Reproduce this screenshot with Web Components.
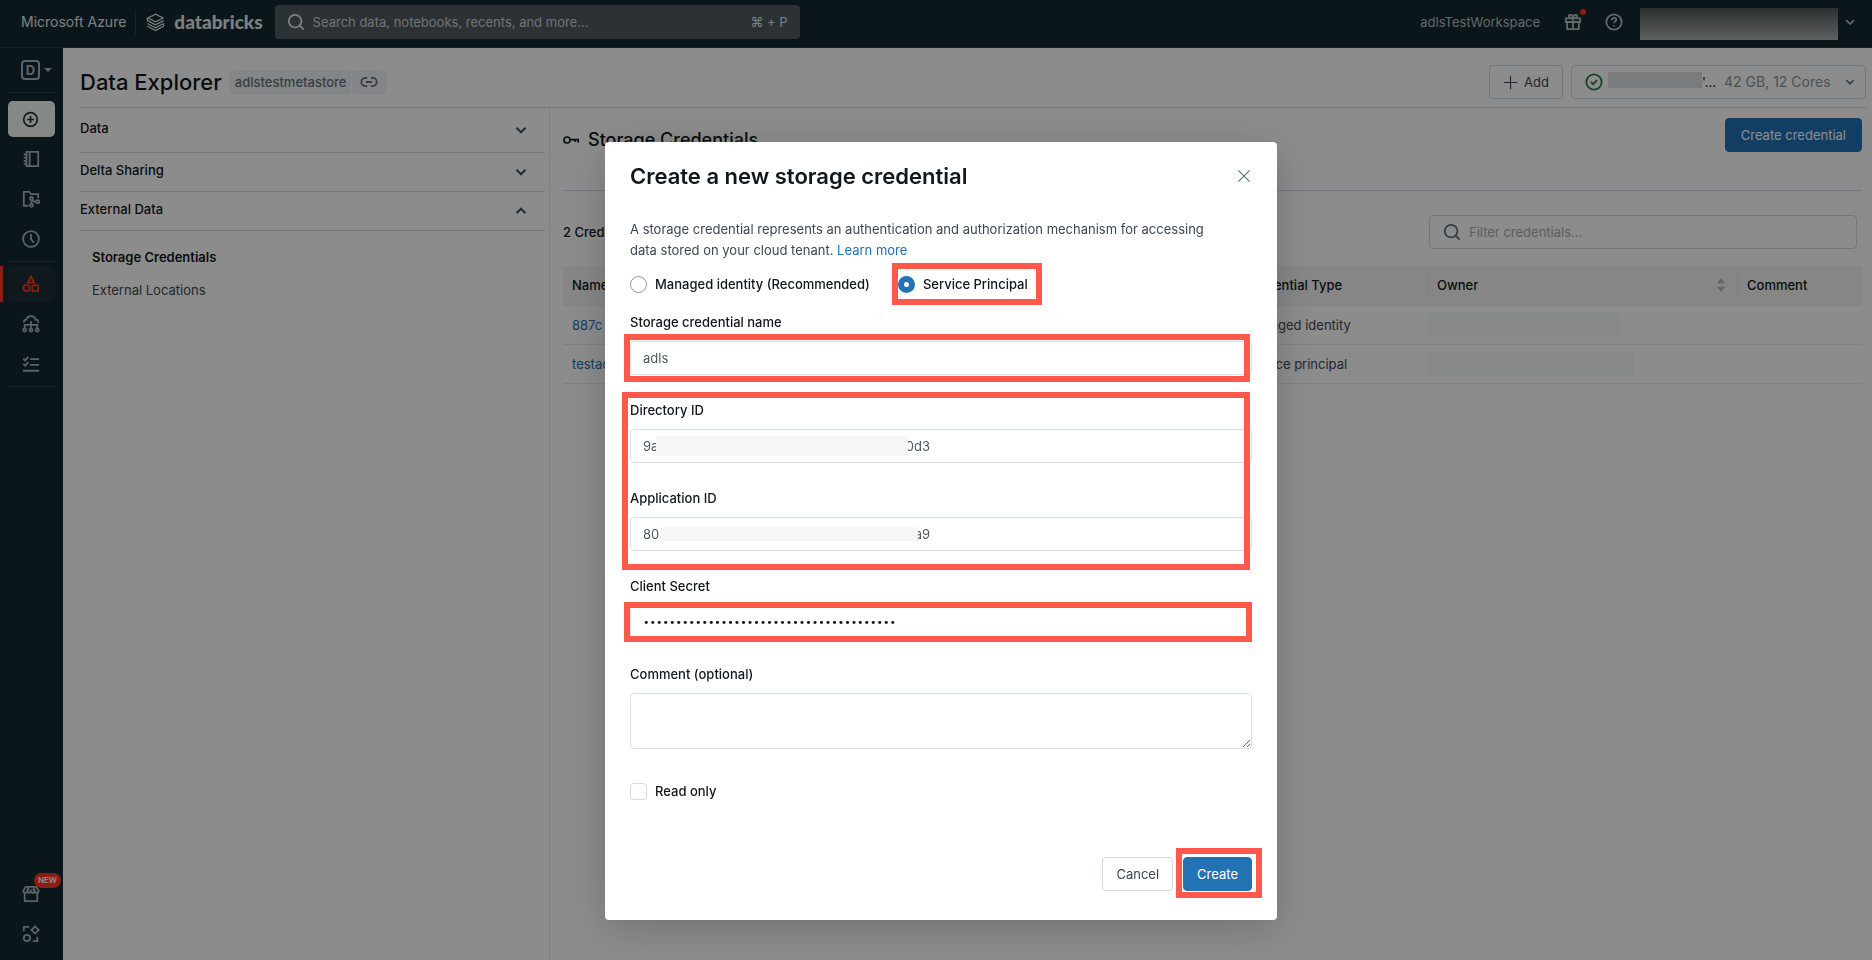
<!DOCTYPE html>
<html lang="en">
<head>
<meta charset="utf-8">
<title>Data Explorer</title>
<style>
  body { margin: 0; font: 14px/20px Inter, "Liberation Sans", sans-serif; color: #11171c; }
</style>
</head>
<body>
<app-shell>
  <app-topbar slot="top"></app-topbar>
  <app-sidebar slot="side"></app-sidebar>
  <page-header slot="head"></page-header>
  <nav slot="nav" aria-label="Data explorer">
    <nav-section label="Data"></nav-section>
    <nav-section label="Delta Sharing"></nav-section>
    <nav-section label="External Data" open>
      <nav-entry current>Storage Credentials</nav-entry>
      <nav-entry>External Locations</nav-entry>
    </nav-section>
  </nav>
  <credentials-view></credentials-view>
</app-shell>
<modal-dialog heading="Create a new storage credential">
  <credential-form></credential-form>
</modal-dialog>

<script>
const icons = {
  logo: '<path d="M2 5.300 10 1.300l8 4-8 4zM1.500 8l8.500 4.500L18.500 8M1.500 11l8.500 4.500 8.500-4.500M1.500 14l8.500 4.500 8.500-4.500M1.500 8v-2.500M18.500 14v-3" stroke-width="1.300"/>',
  search: '<circle cx="9" cy="9" r="7"/><path d="m14 14 4.500 4.500"/>',
  gift: '<path d="M2 6h16v4H2zM3.500 10v8h13v-8M10 6v12M10 6C5 6 4 2 7 2s3 4 3 4 0-4 3-4 2 4-3 4z"/>',
  help: '<circle cx="10" cy="10" r="8.500"/><path d="M7.500 8c0-3.500 5-3.500 5-.5 0 2-2.500 2-2.500 4M10 13.500v1.500"/>',
  down: '<path d="m5 7.500 5 5 5-5"/>',
  up: '<path d="m5 12.500 5-5 5 5"/>',
  caret: '<path d="M0 5h20l-10 10z" fill="currentColor" stroke="none"/>',
  plusCircle: '<circle cx="10" cy="10" r="8"/><path d="M10 6v8M6 10h8"/>',
  notebook: '<path d="M5 2h13v16H5zM8.500 2v16M2 5h4M2 8.500h4M2 12h4M2 15.500h4"/>',
  repo: '<path d="M7 17.500H2V2h6l2 2.500h8V9"/><circle cx="10.500" cy="9.500" r="1.700"/><circle cx="10.500" cy="17" r="1.700"/><circle cx="17.500" cy="13" r="1.700"/><path d="M10.500 11v4.500M11.500 11l2 2h2.500"/>',
  clock: '<circle cx="10" cy="10" r="8.800"/><path d="M10 4.500V10l3 4"/>',
  shapes: '<path d="m10 1.500 3.500 7h-7z"/><circle cx="5" cy="14.500" r="3.500"/><path d="M11.500 11.500h6.500v6.500h-6.500z"/>',
  cloud: '<path d="M2.500 8.500C1.500 6.500 3 5 5 5c1-5 9-5 10 0 2.500 0 3.500 1.500 2.500 3.500M3 15v-4h14v4M10 7v8"/><circle cx="3" cy="16.800" r="1.700"/><circle cx="10" cy="16.800" r="1.700"/><circle cx="17" cy="16.800" r="1.700"/>',
  tasks: '<path d="m1.500 4 2 2 3.500-4M1.500 10l2 2L7 8M9 4.500h10M9 11h10M1 17.500h18"/>',
  market: '<path d="M4 2h12l2.500 4.500c0 3-3.500 3-4.200.5-.8 2.500-3.600 2.500-4.300 0-.7 2.500-3.500 2.500-4.300 0-.7 2.500-4.200 2.500-4.200-.5zM3 9v9h14V9M7 2v5M13 2v5"/>',
  partner: '<path d="M8 2H2v5M12 18h5v-5M14.500 1.500 18.500 5.500l-4 4-4-4z"/><circle cx="5.500" cy="14.500" r="3.500"/>',
  link: '<path d="M8 14.500H6a4.500 4.500 0 0 1 0-9h2M12 5.500h2a4.500 4.500 0 0 1 0 9h-2M6.500 10h7"/>',
  plus: '<path d="M10 1v18M1 10h18"/>',
  check: '<circle cx="10" cy="10" r="8.500"/><path d="m6.500 10 2.500 2.500L13.500 8"/>',
  key: '<circle cx="5" cy="10" r="3.800"/><path d="M9 9.500h10v4M15 9.500v3"/>',
  close: '<path d="M3 3l14 14M17 3 3 17"/>',
  sort: '<path d="m10 0 6 7.500H4zM10 20l6-7.500H4z" fill="currentColor" stroke="none"/>'
};

function define(name, html) {
  customElements.define(name, class extends HTMLElement {
    constructor() {
      super();
      this.attachShadow({ mode: 'open' });
    }
    connectedCallback() {
      if (this.shadowRoot.childNodes.length) return;
      this.shadowRoot.innerHTML = typeof html === 'function' ? html(this) : html;
    }
  });
}

const reset = `
  *, *::before, *::after { box-sizing: border-box; }
  button, input, select, textarea { font: inherit; color: inherit; margin: 0; }
  button { cursor: pointer; }
  a { text-decoration: none; }
`;

define('ui-icon', el => `
  <style>
    :host { display: block; flex: none; width: var(--size, 18px); height: var(--size, 18px); }
    svg { display: block; width: 100%; height: 100%; fill: none; stroke: currentColor; stroke-width: var(--stroke, 2); }
  </style>
  <svg viewBox="0 0 20 20" aria-hidden="true">${icons[el.getAttribute('name')]}</svg>`);

define('ui-button', `
  <style>${reset}
    :host { display: block; flex: none; }
    button { display: flex; align-items: center; gap: 6px; height: 34px; padding: 0 var(--pad, 13px); border: 1px solid #d0dae6; border-radius: 4px; background: #fff; white-space: nowrap; color: #3c4852; font-size: 13px; }
    :host([primary]) button { background: #2272b4; border-color: #2272b4; color: #fff; }
  </style>
  <button type="button"><slot></slot></button>`);

/* A blurred-out block that hides private text */
define('redacted-text', `
  <style>
    :host { display: block; flex: none; width: var(--w); height: var(--h, 16px); background: var(--fill, #f5f6f6); }
  </style>`);

define('app-shell', `
  <style>
    :host { display: grid; grid-template: auto auto 1fr / 63px 486px minmax(0, 1fr); min-height: 100vh; background: #fff; }
    slot[name=top], slot[name=side], slot[name=head], slot[name=nav] { display: block; }
    slot[name=top] { grid-column: 1 / -1; }
    slot[name=side] { grid-row: 2 / 4; display: grid; }
    slot[name=head] { grid-column: 2 / -1; }
    slot[name=nav] { padding: 0 4px 0 17px; }
    main { border-left: 1px solid #e2e8ec; }
  </style>
  <slot name="top"></slot>
  <slot name="side"></slot>
  <slot name="head"></slot>
  <slot name="nav"></slot>
  <main><slot></slot></main>`);

define('app-topbar', `
  <style>${reset}
    :host { display: block; background: #132930; color: #e3e7e9; }
    header { display: flex; align-items: center; height: 48px; padding: 0 14px 3px 21px; border-bottom: 1px solid #2b4249; }
    .cloud { font-size: 14px; }
    .brand { display: flex; align-items: center; gap: 9px; margin-left: 9px; padding-left: 10px; height: 25px; border-left: 1px solid #2f4349; color: inherit; font: 900 19px/24px Lato, sans-serif; --size: 19px; }
    .search { display: flex; align-items: center; gap: 8px; width: 525px; height: 34px; margin-left: 12px; padding: 0 12px; border-radius: 4px; background: #50595e; font-size: 13px; }
    .search input { flex: 1; min-width: 0; border: 0; padding: 0; background: none; outline: 0; }
    .search input::placeholder { color: #cdd2d5; opacity: 1; }
    .end { display: flex; align-items: center; margin-left: auto; font-size: 13px; color: #b6bec2; }
    .icon { position: relative; padding: 0; border: 0; background: none; }
    .gift { margin-left: 24px; }
    .help { margin: 0 17px 0 23px; }
    .dot { position: absolute; top: -4px; right: -4px; width: 6px; height: 6px; border-radius: 50%; background: #ff3621; }
    .chevron { margin-left: 4px; --size: 16px; }
    redacted-text { --w: 198px; --h: 32px; --fill: linear-gradient(#4c5759, #adadaf); margin-top: 4px; }
  </style>
  <header>
    <span class="cloud">Microsoft Azure</span>
    <a class="brand" href="#"><ui-icon name="logo"></ui-icon>databricks</a>
    <label class="search"><ui-icon name="search"></ui-icon>
      <input type="text" placeholder="Search data, notebooks, recents, and more..." aria-label="Search"><span>⌘ + P</span></label>
    <div class="end">
      <span>adlsTestWorkspace</span>
      <button class="icon gift" aria-label="What's new"><ui-icon name="gift"></ui-icon><span class="dot"></span></button>
      <button class="icon help" aria-label="Help"><ui-icon name="help"></ui-icon></button>
      <redacted-text></redacted-text>
      <button class="icon chevron" aria-label="Account"><ui-icon name="down"></ui-icon></button>
    </div>
  </header>`);

define('side-item', el => `
  <style>${reset}
    :host { display: block; position: relative; }
    a { display: flex; align-items: center; justify-content: center; height: 36px; margin: 0 8px; padding-right: 2px; border-radius: 5px; color: #a9b3b6; }
    :host([raised]) a { background: #f5f8f8; color: #1b3139; --size: 17px; }
    :host([active]) a { background: #1d2f38; color: #ff3621; }
    :host([active])::before { content: ""; position: absolute; left: 0; top: 0; width: 3px; height: 36px; background: #ff3621; }
    .badge { position: absolute; top: -3px; right: 2px; padding: 0 4px; border-radius: 8px; background: #ff3621; color: #fff; font: 600 8px/15px Inter, sans-serif; }
  </style>
  <a href="#" aria-label="${el.getAttribute('label')}"><ui-icon name="${el.getAttribute('icon')}"></ui-icon></a>
  ${el.hasAttribute('badge') ? `<span class="badge">${el.getAttribute('badge')}</span>` : ''}`);

define('app-sidebar', `
  <style>${reset}
    :host { display: grid; background: #132930; }
    nav { display: flex; flex-direction: column; padding: 8px 0 8px; }
    hr { width: 47px; height: 1px; margin: 4px 8px; border: 0; background: #2f4349; }
    .persona { display: flex; align-items: center; gap: 4px; height: 28px; margin-bottom: 4px; padding: 0 0 0 21px; border: 0; background: none; color: #a9b3b6; }
    .persona b { width: 19px; height: 20px; border: 2px solid; border-radius: 4px; font-size: 13px; line-height: 16px; text-align: center; }
    .persona ui-icon { --size: 8px; }
    .group { display: grid; gap: 4px; }
    .main { padding-top: 4px; }
    .end { margin-top: auto; }
  </style>
  <nav aria-label="Main">
    <button class="persona" aria-label="Switch persona"><b>D</b><ui-icon name="caret"></ui-icon></button>
    <hr>
    <div class="group main">
      <side-item raised icon="plusCircle" label="New"></side-item>
      <side-item icon="notebook" label="Workspace"></side-item>
      <side-item icon="repo" label="Repos"></side-item>
      <side-item icon="clock" label="Recents"></side-item>
    </div>
    <hr>
    <div class="group">
      <side-item active icon="shapes" label="Data"></side-item>
      <side-item icon="cloud" label="Compute"></side-item>
      <side-item icon="tasks" label="Workflows"></side-item>
    </div>
    <hr>
    <div class="group end">
      <side-item icon="market" label="Marketplace" badge="NEW"></side-item>
      <side-item icon="partner" label="Partner Connect"></side-item>
    </div>
  </nav>`);

define('page-header', `
  <style>${reset}
    :host { display: block; padding: 0 6px 0 17px; }
    header { display: flex; align-items: center; gap: 8px; padding: 17px 0 8px; border-bottom: 1px solid #d8dee4; }
    h1 { margin: 0; font-size: 22px; line-height: 32px; font-weight: 500; }
    .meta { display: flex; gap: 1px; color: #5f7281; font-size: 13px; font-weight: 500; line-height: 24px; }
    .meta > * { padding: 0 5px; border: 0; border-radius: 3px; background: #f0f3f6; color: inherit; }
    .meta button { padding: 0 8px; --size: 18px; }
    .end { display: flex; gap: 8px; margin-left: auto; }
    .add { --size: 15px; --stroke: 1.500; }
    .compute { display: flex; align-items: center; width: 295px; height: 34px; padding: 0 8px 0 13px; border: 1px solid #d0dae6; border-radius: 4px; font-size: 13px; }
    .ok { color: #277c43; margin-right: 5px; }
    .compute select { flex: 1; min-width: 0; margin-left: 8px; padding: 0; border: 0; background: none; appearance: none; color: #8c959c; font-size: 14px; }
    .arrow { color: #5f7281; --size: 14px; --stroke: 2.500; }
    redacted-text { --w: 94px; --fill: #dfe1e2; margin-bottom: 4px; }
  </style>
  <header>
    <h1>Data Explorer</h1>
    <div class="meta"><span>adlstestmetastore</span><button aria-label="Copy link"><ui-icon name="link"></ui-icon></button></div>
    <div class="end">
      <ui-button class="add"><ui-icon name="plus"></ui-icon>Add</ui-button>
      <label class="compute"><ui-icon class="ok" name="check"></ui-icon><redacted-text></redacted-text><span>'...</span>
        <select aria-label="Compute"><option>42 GB, 12 Cores</option></select><ui-icon class="arrow" name="down"></ui-icon></label>
    </div>
  </header>`);

define('nav-section', el => `
  <style>${reset}
    :host { display: block; font-size: 13px; font-weight: 500; }
    button { display: flex; align-items: center; justify-content: space-between; width: 100%; height: 39px; padding: 0 15px 0 0; border: 0; border-bottom: 1px solid #cfd9e4; background: none; font-weight: inherit; }
    span { padding-bottom: 4px; }
    :host(:first-child) button { height: 45px; }
    ui-icon { color: #44596b; --size: 18px; --stroke: 2.500; }
    .body { padding: 16px 12px; }
    :host(:not([open])) .body { display: none; }
  </style>
  <button type="button"><span>${el.getAttribute('label')}</span><ui-icon name="${el.hasAttribute('open') ? 'up' : 'down'}"></ui-icon></button>
  <div class="body"><slot></slot></div>`);

define('nav-entry', `
  <style>${reset}
    :host { display: block; line-height: 20px; padding: 0 0 13px; font-weight: 400; }
    a { color: #3c4852; }
    :host([current]) a { color: #11171c; font-weight: 600; }
  </style>
  <a href="#"><slot></slot></a>`);

define('credentials-view', `
  <style>${reset}
    :host { display: block; padding: 10px 10px 0 13px; font-size: 13px; }
    header { display: flex; align-items: flex-start; padding-bottom: 36px; border-bottom: 1px solid #cfdce8; }
    h2 { display: flex; align-items: center; gap: 9px; margin: 8px 0 0; font-size: 18px; line-height: 28px; font-weight: 500; --size: 16px; }
    header ui-button { margin-left: auto; --pad: 15px; }
    .tools { display: flex; align-items: center; justify-content: space-between; padding: 24px 5px 17px 0; font-weight: 500; }
    .filter { display: flex; align-items: center; gap: 8px; width: 428px; height: 34px; padding: 0 13px; border: 1px solid #cfdce8; border-radius: 4px; color: #5f7281; font-weight: 400; }
    .filter input { flex: 1; min-width: 0; padding: 0; border: 0; outline: 0; background: none; }
    .filter input::placeholder { color: #a5adb3; opacity: 1; }
    table { width: 100%; table-layout: fixed; border-collapse: collapse; }
    th, td { height: 39px; padding: 0 9px; border-bottom: 1px solid #e8ebee; text-align: left; font-weight: 400; }
    th { background: #f5f5f5; font-weight: 500; }
    th div { display: flex; justify-content: space-between; align-items: center; color: inherit; }
    th ui-icon { --size: 14px; color: #b5babd; }
    th.rule div { margin-left: -9px; padding-left: 9px; border-left: 1px solid #e6e8ea; line-height: 24px; }
    td { color: #3c4852; }
    td.owner { padding-left: 0; }
    a { color: #2272b4; }
    redacted-text { --h: 24px; --fill: #f8fafa; }
    .type { width: 192px; } .own { width: 310px; } .note { width: 125px; }
  </style>
  <header>
    <h2><ui-icon name="key"></ui-icon>Storage Credentials</h2>
    <ui-button primary>Create credential</ui-button>
  </header>
  <div class="tools">
    <span>2 Credentials</span>
    <label class="filter"><ui-icon name="search"></ui-icon><input type="text" placeholder="Filter credentials..." aria-label="Filter credentials"></label>
  </div>
  <table>
    <thead><tr><th>Name</th><th class="type">Credential Type</th>
      <th class="own rule"><div>Owner<ui-icon name="sort"></ui-icon></div></th>
      <th class="note rule"><div>Comment</div></th></tr></thead>
    <tbody>
      <tr><td><a href="#">887c</a></td><td>Managed identity</td><td class="owner"><redacted-text style="--w: 194px"></redacted-text></td><td></td></tr>
      <tr><td><a href="#">testac</a></td><td>Service principal</td><td class="owner"><redacted-text style="--w: 207px"></redacted-text></td><td></td></tr>
    </tbody>
  </table>`);

define('modal-dialog', el => `
  <style>${reset}
    :host { position: fixed; inset: 0; display: flex; justify-content: center; align-items: flex-start; padding: 142px 0 0 10px; background: rgba(0, 0, 0, .45); overflow: auto; }
    section { width: 672px; padding: 20px 25px 29px; border-radius: 4px; background: #fff; box-shadow: 0 8px 40px rgba(0, 0, 0, .2); }
    header { display: flex; align-items: center; justify-content: space-between; }
    h2 { margin: 0; font-size: 22px; line-height: 28px; font-weight: 600; }
    .close { padding: 0; border: 0; background: none; color: #5f7281; --size: 16px; --stroke: 1.500; }
  </style>
  <section role="dialog" aria-modal="true" aria-labelledby="title">
    <header><h2 id="title">${el.getAttribute('heading')}</h2>
      <button class="close" aria-label="Close"><ui-icon name="close"></ui-icon></button></header>
    <slot></slot>
  </section>`);

/* Red annotation frame drawn around whatever it wraps */
define('mark-box', `
  <style>
    :host { display: block; position: relative; }
    :host::after { content: ""; position: absolute; inset: var(--reach, -7px 2px -7px -6px); border: 6px solid #ff594c; pointer-events: none; }
  </style>
  <slot></slot>`);

define('credential-form', `
  <style>${reset}
    :host { display: block; margin-top: 29px; font-size: 13px; }
    p { margin: 0 0 13px; line-height: 21px; color: #3c4852; }
    a { color: #2272b4; }
    .radios { display: flex; gap: 28px; margin-bottom: 18px; }
    .choice { display: flex; align-items: center; gap: 8px; height: 20px; font-weight: 500; }
    .choice input { appearance: none; width: 17px; height: 17px; border: 1px solid #8a99a6; background: #fff; }
    .choice input[type=radio] { border-radius: 50%; }
    .choice input[type=radio]:checked { border: 6px solid #2272b4; }
    .choice input[type=checkbox] { border-color: #cfdce8; border-radius: 4px; }
    .field { display: grid; gap: 9px; margin-bottom: 25px; }
    .field label { font-weight: 500; }
    .box { display: flex; align-items: center; width: 100%; height: 34px; padding: 0 12px; border: 1px solid #d5e0ea; border-radius: 4px; background: #fff; color: #4c5862; }
    .box input { border: 0; padding: 0; outline: 0; background: none; }
    .lead { width: 13px; }
    .tail { display: flex; justify-content: flex-end; width: 22px; overflow: hidden; }
    .app .lead { width: 17px; }
    .app .tail { width: 12px; }
    textarea { display: block; width: 100%; height: 56px; border: 1px solid #d5e0ea; border-radius: 4px; outline: 0; }
    .secret { color: #11171c; font: 11px/20px "DejaVu Sans", sans-serif; }
    .group { --reach: -8px 2px -19px -8px; margin-bottom: 25px; }
    .group .field:last-child { margin: 0; }
    .last { margin-bottom: 32px; }
    .actions { display: flex; justify-content: flex-end; gap: 10px; margin-top: 56px; }
  </style>
  <p>A storage credential represents an authentication and authorization mechanism for accessing<br>data stored on your cloud tenant. <a href="#">Learn more</a></p>
  <div class="radios">
    <label class="choice"><input type="radio" name="kind">Managed identity (Recommended)</label>
    <mark-box style="--reach: -11px -14px -11px -6px"><label class="choice"><input type="radio" name="kind" checked>Service Principal</label></mark-box>
  </div>
  <div class="field"><label for="name">Storage credential name</label>
    <mark-box><input id="name" class="box" type="text" value="adls"></mark-box></div>
  <mark-box class="group">
    <div class="field"><label for="dir">Directory ID</label>
      <div class="box"><input id="dir" class="lead" type="text" value="9a"><redacted-text style="--w: 252px; --h: 20px"></redacted-text><span class="tail">0d3</span></div></div>
    <div class="field app"><label for="app">Application ID</label>
      <div class="box"><input id="app" class="lead" type="text" value="80"><redacted-text style="--w: 258px; --h: 14px"></redacted-text><span class="tail">a9</span></div></div>
  </mark-box>
  <div class="field"><label for="secret">Client Secret</label>
    <mark-box style="--reach: -3px 0 -3px -6px"><input id="secret" class="box secret" type="password" value="012345678901234567890123456789012345678"></mark-box></div>
  <div class="field last"><label for="comment">Comment (optional)</label>
    <textarea id="comment"></textarea></div>
  <label class="choice"><input type="checkbox">Read only</label>
  <div class="actions">
    <ui-button>Cancel</ui-button>
    <mark-box style="--reach: -9px -10px -7px -7px"><ui-button primary>Create</ui-button></mark-box>
  </div>`);
</script>
</body>
</html>
